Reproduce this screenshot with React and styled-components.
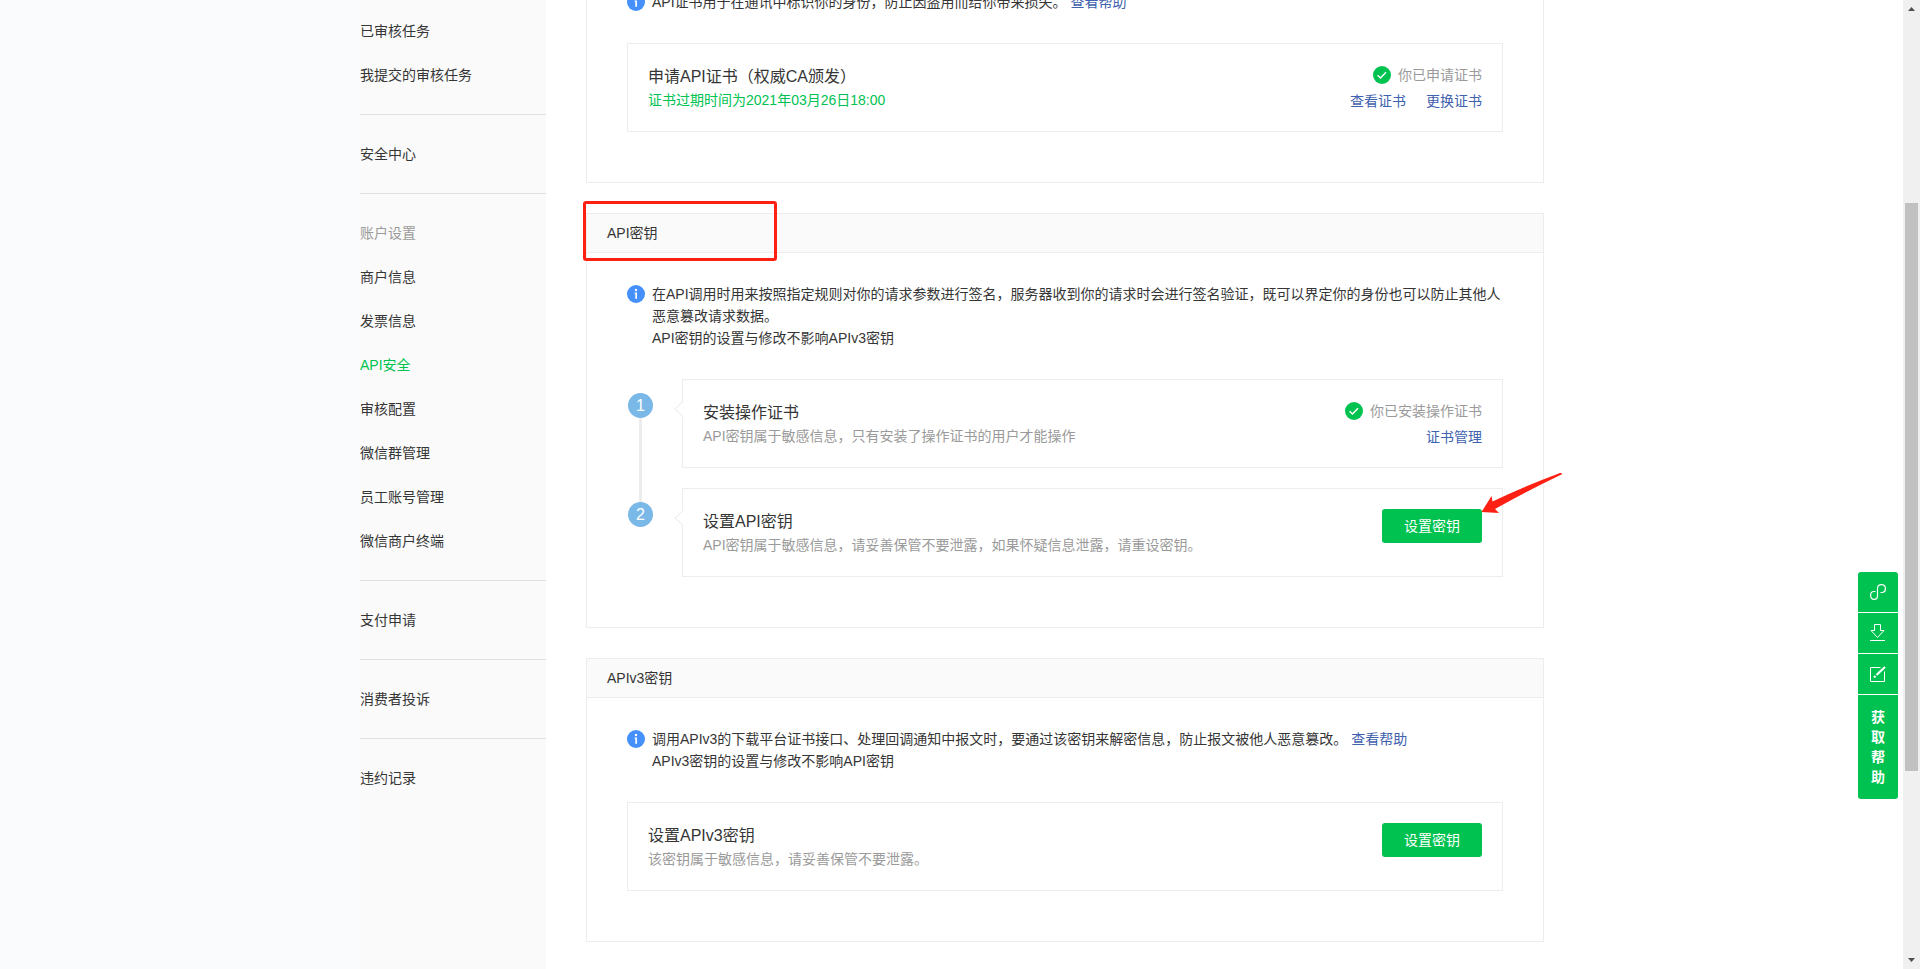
import React from 'react';
import styled, { createGlobalStyle, css } from 'styled-components';

const GlobalStyle = createGlobalStyle`
    * {
        box-sizing: border-box;
    }

    body {
        margin: 0;
        color: #353535;
        font-family: 'Liberation Sans', 'Noto Sans CJK SC', sans-serif;
        font-size: 14px;
        line-height: 22px;
    }

    h2, h3, p, ul {
        margin: 0;
        padding: 0;
        font-weight: normal;
    }
`;

const Page = styled.div`
    display: flex;
    height: 100vh;
    overflow: hidden;
    background-color: #fff;
`;

const Gutter = styled.div`
    flex: 360 1 0;
    background-color: #fafbfd;
`;

const Spare = styled.div`
    flex: 359 1 0;
`;

/* Sidebar */
const Sidebar = styled.nav`
    flex: 0 0 186px;
    background-color: #fafafa;
`;

const MenuGroup = styled.ul`
    padding: 17px 0;
    list-style: none;
    border-bottom: 1px solid #e0e0e0;

    &:first-child {
        padding-top: 9px;
    }

    &:last-child {
        border-bottom: none;
    }
`;

const MenuTitle = styled.li`
    line-height: 44px;
    color: #9a9a9a;
`;

const MenuLink = styled.a`
    display: block;
    line-height: 44px;
    color: ${(props) => (props.$active ? '#00c250' : '#353535')};
    text-decoration: none;
`;

/* Main column */
const Main = styled.main`
    flex: 0 1 958px;
    margin: -40px 0 0 40px;
`;

const Panel = styled.section`
    position: relative;
    margin-bottom: 30px;
    border: 1px solid #ededed;
`;

const PanelTitle = styled.h2`
    padding: 0 20px;
    font-size: 14px;
    line-height: 38px;
    background-color: #fafafa;
    border-bottom: 1px solid #ededed;
`;

const PanelBody = styled.div`
    padding: 30px 40px 50px;
`;

const Notice = styled.div`
    display: flex;
    gap: 7px;
    margin-bottom: 30px;

    svg {
        flex: none;
        margin-top: 2px;
    }
`;

const Link = styled.a`
    color: #4061ad;
    text-decoration: none;
`;

const HelpLink = styled(Link)`
    margin-left: 4px;
`;

const Card = styled.div`
    position: relative;
    flex: 1;
    display: flex;
    justify-content: space-between;
    min-height: 89px;
    padding: 20px 20px 18px;
    border: 1px solid #ededed;
`;

const CardTitle = styled.h3`
    font-size: 16px;
    line-height: 25px;
`;

const CardText = styled.p`
    color: ${(props) => (props.$green ? '#00c250' : '#9a9a9a')};
`;

const Status = styled.div`
    display: flex;
    align-items: center;
    justify-content: flex-end;
    gap: 7px;
    margin-bottom: 4px;
    color: #9a9a9a;
`;

const Links = styled.div`
    display: flex;
    justify-content: flex-end;
    gap: 20px;
`;

const ButtonWrap = styled.div`
    position: relative;
    height: 34px;
`;

const Button = styled.button`
    width: 100px;
    height: 34px;
    padding: 0;
    font: inherit;
    color: #fff;
    background-color: #00c250;
    border: none;
    border-radius: 3px;
    cursor: pointer;
`;

/* Steps */
const Step = styled.div`
    position: relative;
    display: flex;
    gap: 29px;
    padding-left: 1px;

    & + & {
        margin-top: 20px;
    }

    ${(props) =>
        props.$line &&
        css`
            &::before {
                content: '';
                position: absolute;
                top: 39px;
                bottom: -34px;
                left: 12px;
                width: 3px;
                background-color: #ececec;
            }
        `}
`;

const StepNumber = styled.span`
    flex: none;
    width: 25px;
    height: 25px;
    margin-top: 14px;
    font-size: 16px;
    line-height: 25px;
    text-align: center;
    color: #fff;
    background-color: #7ab8e8;
    border-radius: 50%;
`;

const StepCard = styled(Card)`
    &::before {
        content: '';
        position: absolute;
        top: 23px;
        left: -6px;
        width: 11px;
        height: 11px;
        background-color: #fff;
        border: solid #ededed;
        border-width: 0 0 1px 1px;
        transform: rotate(45deg);
    }
`;

/* Red marks over the page */
const MarkBox = styled.div`
    position: absolute;
    top: -13px;
    left: -4px;
    width: 194px;
    height: 60px;
    border: 3px solid #ff2014;
    border-radius: 3px;
`;

const MarkArrow = styled.svg`
    position: absolute;
    top: -37px;
    left: 99px;
    pointer-events: none;
`;

/* Floating tools */
const Tools = styled.aside`
    position: fixed;
    right: 22px;
    bottom: 170px;
    display: flex;
    flex-direction: column;
    gap: 1px;
    width: 40px;
    overflow: hidden;
    border-radius: 3px;
`;

const Tool = styled.button`
    display: flex;
    align-items: center;
    justify-content: center;
    height: 40px;
    padding: 0;
    color: #fff;
    background-color: #00c250;
    border: none;
    cursor: pointer;
`;

const HelpTool = styled(Tool)`
    height: auto;
    padding: 12px 13px;
    font: inherit;
    font-weight: bold;
    line-height: 20px;
`;

/* Scroll bar */
const Scrollbar = styled.div`
    flex: 0 0 17px;
    display: flex;
    flex-direction: column;
    background-color: #f0f0f0;
`;

const ScrollArrow = styled.svg`
    flex: none;
    width: 17px;
    height: 17px;
`;

const ScrollSpace = styled.div`
    flex: ${(props) => props.$size} 1 0;
`;

const ScrollThumb = styled.div`
    flex: 568 1 0;
    margin: 0 2px;
    background-color: #c1c1c1;
`;

const menu = [
    { items: ['已审核任务', '我提交的审核任务'] },
    { items: ['安全中心'] },
    {
        title: '账户设置',
        items: ['商户信息', '发票信息', 'API安全', '审核配置', '微信群管理', '员工账号管理', '微信商户终端'],
    },
    { items: ['支付申请'] },
    { items: ['消费者投诉'] },
    { items: ['违约记录'] },
];

const InfoIcon = () => (
    <svg width="18" height="18" viewBox="0 0 18 18" aria-hidden="true">
        <circle cx="9" cy="9" r="9" fill="#4590fa" />
        <circle cx="9" cy="5" r="1.2" fill="#fff" />
        <path d="M7.5 7.4H10V13.8H8.3V8.6H7.5Z" fill="#fff" />
    </svg>
);

const CheckIcon = () => (
    <svg width="18" height="18" viewBox="0 0 18 18" aria-hidden="true">
        <circle cx="9" cy="9" r="9" fill="#00c250" />
        <path d="M4.6 9.2L7.5 12L13 6.2" fill="none" stroke="#fff" strokeWidth="1.4" />
    </svg>
);

const App = () => {
    return (
        <>
            <GlobalStyle />
            <Page lang="zh-CN">
                <Gutter />
                <Sidebar>
                    {menu.map((group) => (
                        <MenuGroup key={group.items[0]}>
                            {group.title && <MenuTitle>{group.title}</MenuTitle>}
                            {group.items.map((item) => (
                                <li key={item}>
                                    <MenuLink href="#" $active={item === 'API安全'}>
                                        {item}
                                    </MenuLink>
                                </li>
                            ))}
                        </MenuGroup>
                    ))}
                </Sidebar>

                <Main>
                    <Panel>
                        <PanelBody>
                            <Notice>
                                <InfoIcon />
                                <p>
                                    API证书用于在通讯中标识你的身份，防止因盗用而给你带来损失。
                                    <HelpLink href="#">查看帮助</HelpLink>
                                </p>
                            </Notice>
                            <Card>
                                <div>
                                    <CardTitle>申请API证书（权威CA颁发）</CardTitle>
                                    <CardText $green>证书过期时间为2021年03月26日18:00</CardText>
                                </div>
                                <div>
                                    <Status>
                                        <CheckIcon />
                                        你已申请证书
                                    </Status>
                                    <Links>
                                        <Link href="#">查看证书</Link>
                                        <Link href="#">更换证书</Link>
                                    </Links>
                                </div>
                            </Card>
                        </PanelBody>
                    </Panel>

                    <Panel>
                        <PanelTitle>API密钥</PanelTitle>
                        <MarkBox />
                        <PanelBody>
                            <Notice>
                                <InfoIcon />
                                <div>
                                    <p>
                                        在API调用时用来按照指定规则对你的请求参数进行签名，服务器收到你的请求时会进行签名验证，既可以界定你的身份也可以防止其他人恶意篡改请求数据。
                                    </p>
                                    <p>API密钥的设置与修改不影响APIv3密钥</p>
                                </div>
                            </Notice>
                            <Step $line>
                                <StepNumber>1</StepNumber>
                                <StepCard>
                                    <div>
                                        <CardTitle>安装操作证书</CardTitle>
                                        <CardText>API密钥属于敏感信息，只有安装了操作证书的用户才能操作</CardText>
                                    </div>
                                    <div>
                                        <Status>
                                            <CheckIcon />
                                            你已安装操作证书
                                        </Status>
                                        <Links>
                                            <Link href="#">证书管理</Link>
                                        </Links>
                                    </div>
                                </StepCard>
                            </Step>
                            <Step>
                                <StepNumber>2</StepNumber>
                                <StepCard>
                                    <div>
                                        <CardTitle>设置API密钥</CardTitle>
                                        <CardText>API密钥属于敏感信息，请妥善保管不要泄露，如果怀疑信息泄露，请重设密钥。</CardText>
                                    </div>
                                    <ButtonWrap>
                                        <Button type="button">设置密钥</Button>
                                        <MarkArrow width="82" height="43" viewBox="0 0 82 43" aria-hidden="true">
                                            <path
                                                d="M0.5 40L10.5 24L11.5 29.5Q44 14 79 1Q82 0.5 80.5 2.5Q46 19 14 37L18 41Z"
                                                fill="#ff2014"
                                            />
                                        </MarkArrow>
                                    </ButtonWrap>
                                </StepCard>
                            </Step>
                        </PanelBody>
                    </Panel>

                    <Panel>
                        <PanelTitle>APIv3密钥</PanelTitle>
                        <PanelBody>
                            <Notice>
                                <InfoIcon />
                                <div>
                                    <p>
                                        调用APIv3的下载平台证书接口、处理回调通知中报文时，要通过该密钥来解密信息，防止报文被他人恶意篡改。
                                        <HelpLink href="#">查看帮助</HelpLink>
                                    </p>
                                    <p>APIv3密钥的设置与修改不影响API密钥</p>
                                </div>
                            </Notice>
                            <Card>
                                <div>
                                    <CardTitle>设置APIv3密钥</CardTitle>
                                    <CardText>该密钥属于敏感信息，请妥善保管不要泄露。</CardText>
                                </div>
                                <Button type="button">设置密钥</Button>
                            </Card>
                        </PanelBody>
                    </Panel>
                </Main>
                <Spare />

                <Scrollbar aria-hidden="true">
                    <ScrollArrow viewBox="0 0 17 17">
                        <path d="M5 11L8.5 7L12 11Z" fill="#505050" />
                    </ScrollArrow>
                    <ScrollSpace $size={186} />
                    <ScrollThumb />
                    <ScrollSpace $size={181} />
                    <ScrollArrow viewBox="0 0 17 17">
                        <path d="M5 6L8.5 10L12 6Z" fill="#505050" />
                    </ScrollArrow>
                </Scrollbar>
            </Page>

            <Tools>
                <Tool type="button" aria-label="链接">
                    <svg width="16" height="16" viewBox="0 0 16 16" fill="none" stroke="#fff" strokeWidth="1.2">
                        <path d="M5.5 7.5H4C2 7.5 0.6 9.2 0.6 11.2C0.6 13.5 2 15.4 4.2 15.4C6.5 15.4 7.5 14 7.5 11.5V4.5C7.5 2 9.2 0.6 11.5 0.6C14 0.6 15.4 2.3 15.4 4.5C15.4 6.8 14 8.5 12 8.5H10.5" />
                    </svg>
                </Tool>
                <Tool type="button" aria-label="下载">
                    <svg width="16" height="18" viewBox="0 0 16 18" fill="none" stroke="#fff">
                        <path d="M4.5 0.5H10.5V6.5H14L7.5 13.5L1 6.5H4.5Z" />
                        <path d="M0 16.5H15" />
                    </svg>
                </Tool>
                <Tool type="button" aria-label="反馈">
                    <svg width="16" height="16" viewBox="0 0 16 16" fill="none" stroke="#fff">
                        <path d="M10.5 1.5H0.5V15.5H14.5V5.5" />
                        <path d="M6.5 9L15 1" strokeWidth="2" />
                        <path d="M4 11.5L5.5 10" strokeWidth="2" />
                    </svg>
                </Tool>
                <HelpTool type="button">获取帮助</HelpTool>
            </Tools>
        </>
    );
};

export default App;
